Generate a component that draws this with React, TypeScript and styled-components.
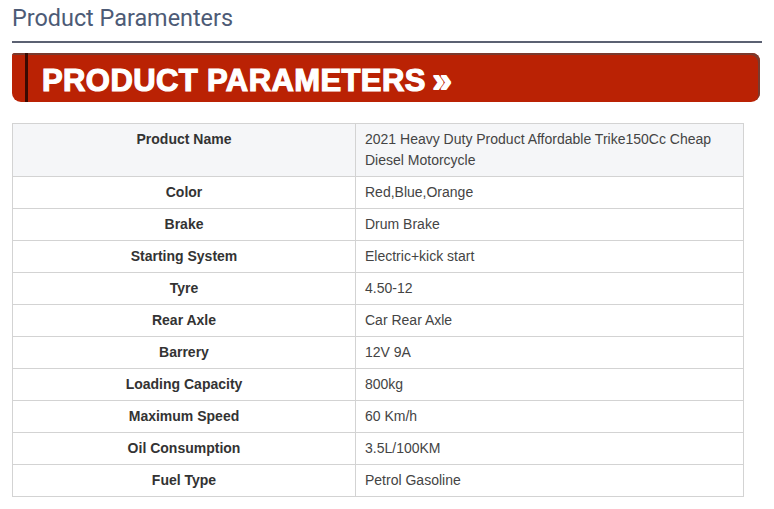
import React from "react";
import styled, { createGlobalStyle } from "styled-components";

const Global = createGlobalStyle`
  html, body { margin: 0; padding: 0; background: #ffffff; }
  body { font-family: "Liberation Sans", Arial, sans-serif; }
`;

const Page = styled.div`
  padding: 4px 12px 0 12px;
  width: 774px;
  box-sizing: border-box;
`;

const Title = styled.h2`
  margin: 0;
  font-family: Roboto, "Liberation Sans", sans-serif;
  font-weight: 400;
  font-size: 23.4px;
  line-height: 28px;
  color: #4d5b76;
  padding-bottom: 9px;
  border-bottom: 2px solid #5b6172;
  width: 750px;
`;

const Banner = styled.div`
  margin-top: 10px;
  width: 748px;
  height: 49px;
  box-sizing: border-box;
  background: #ba2204;
  border-radius: 3px 8px 9px 9px;
  box-shadow: inset -2px 2px 0 #7a3a2e;
  display: flex;
  align-items: center;
  padding-left: 13px;
`;

const Stripe = styled.div`
  width: 3px;
  align-self: stretch;
  background: #3b0a02;
`;

const BannerText = styled.div`
  margin-left: 14px;
  font-family: "Liberation Sans", Arial, sans-serif;
  font-weight: 700;
  font-size: 31px;
  letter-spacing: 0.4px;
  color: #ffffff;
  -webkit-text-stroke: 1.2px #ffffff;
  line-height: 1;
  padding-top: 2px;
`;

const Chevrons = styled.span`
  font-size: 34px;
  -webkit-text-stroke: 1.8px #ffffff;
  margin-left: 7px;
`;

const Table = styled.table`
  margin-top: 21px;
  width: 732px;
  border-collapse: collapse;
  font-size: 14px;
  line-height: 21px;
`;

const Row = styled.tr<{ $shade?: boolean }>`
  background: ${(p) => (p.$shade ? "#f5f6f8" : "#ffffff")};
`;

const Label = styled.td`
  width: 343px;
  box-sizing: border-box;
  border: 1px solid #d3d3d3;
  padding: 5px 10px;
  text-align: center;
  vertical-align: top;
  font-weight: 700;
  color: #333333;
`;

const Value = styled.td`
  border: 1px solid #d3d3d3;
  padding: 5px 10px 5px 9px;
  vertical-align: top;
  color: #444444;
`;

const rows: [string, string][] = [
  ["Product Name", "2021 Heavy Duty Product Affordable Trike150Cc Cheap Diesel Motorcycle"],
  ["Color", "Red,Blue,Orange"],
  ["Brake", "Drum Brake"],
  ["Starting System", "Electric+kick start"],
  ["Tyre", "4.50-12"],
  ["Rear Axle", "Car Rear Axle"],
  ["Barrery", "12V 9A"],
  ["Loading Capacity", "800kg"],
  ["Maximum Speed", "60 Km/h"],
  ["Oil Consumption", "3.5L/100KM"],
  ["Fuel Type", "Petrol Gasoline"],
];

export default function App() {
  return (
    <>
      <Global />
      <Page>
        <Title>Product Paramenters</Title>
        <Banner>
          <Stripe />
          <BannerText>
            PRODUCT PARAMETERS<Chevrons>»</Chevrons>
          </BannerText>
        </Banner>
        <Table>
          <tbody>
            {rows.map(([k, v], i) => (
              <Row key={k} $shade={i === 0}>
                <Label>{k}</Label>
                <Value>{v}</Value>
              </Row>
            ))}
          </tbody>
        </Table>
      </Page>
    </>
  );
}
